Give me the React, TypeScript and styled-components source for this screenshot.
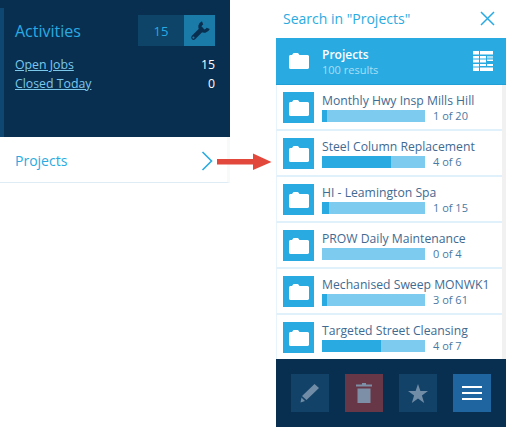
import styled, { createGlobalStyle } from 'styled-components';

const GlobalStyle = createGlobalStyle`
    html, body {
        margin: 0;
        padding: 0;
        background: #fff;
        font-family: "Open Sans", "Liberation Sans", sans-serif;
    }
`;

const Page = styled.div`
    position: relative;
    width: 506px;
    height: 427px;
    overflow: hidden;
    display: flex;
    justify-content: space-between;
    align-items: flex-start;
`;

// LEFT SIDE

const LeftColumn = styled.div`
    width: 230px;
`;

const Dashboard = styled.div`
    height: 137px;
    background: #092f50;
    padding: 8px 0 7px;
    box-sizing: border-box;
`;

const Tile = styled.div`
    height: 122px;
    border-left: 4px solid #0e4772;
    padding: 7px 15px 0 11px;
`;

const TileHead = styled.div`
    display: flex;
    justify-content: space-between;
    align-items: center;
    margin-bottom: 9px;
`;

const TileTitle = styled.div`
    font-size: 16px;
    color: #29abe2;
`;

const Counter = styled.div`
    display: flex;
    height: 31px;
`;

const CounterValue = styled.div`
    width: 46px;
    background: #0e4468;
    color: #29abe2;
    font-size: 13px;
    display: flex;
    align-items: center;
    justify-content: center;
`;

const CounterIcon = styled.div`
    width: 31px;
    background: #1b7ba8;
    display: flex;
    align-items: center;
    justify-content: center;
`;

const StatRow = styled.div`
    display: flex;
    justify-content: space-between;
    height: 19px;
    line-height: 19px;
    font-size: 12.3px;
`;

const StatLink = styled.a`
    color: #7cc8eb;
    text-decoration: underline;
`;

const StatValue = styled.span`
    color: #fff;
`;

const NavRow = styled.div`
    width: 230px;
    height: 46px;
    padding: 2px 15px 0 15px;
    border-right: 3px solid #f8f9f9;
    border-bottom: 1px solid #deedf5;
    box-sizing: border-box;
    display: flex;
    justify-content: space-between;
    align-items: center;
    color: #29abe2;
    font-size: 14px;
`;

const NavChevron = styled.svg`
    margin-right: -1px;
`;

const Arrow = styled.svg`
    position: absolute;
    left: 217px;
    top: 153px;
`;

// RIGHT SIDE

const SearchPanel = styled.div`
    width: 230px;
    height: 427px;
    display: flex;
    flex-direction: column;
`;

const SearchHead = styled.div`
    height: 38px;
    padding: 0 11px 1px 7px;
    display: flex;
    justify-content: space-between;
    align-items: center;
    color: #29abe2;
    font-size: 14px;
    box-sizing: border-box;
`;

const ResultsBar = styled.div`
    height: 47px;
    padding: 0 13px 0 13px;
    background: #29abe2;
    border-bottom: 1px solid #1f9fd6;
    box-sizing: border-box;
    display: flex;
    align-items: center;
`;

const ResultsText = styled.div`
    margin-left: 13px;
    flex: 1;
`;

const ResultsTitle = styled.div`
    color: #fff;
    font-size: 12px;
    line-height: 17px;
    font-weight: 600;
`;

const ResultsCount = styled.div`
    color: #a9def5;
    font-size: 11px;
    line-height: 14px;
`;

const List = styled.div`
    height: 274px;
    overflow: hidden;
    padding-right: 4px;
    background: linear-gradient(#f1f1f1, #f1f1f1) right / 4px 100% no-repeat;
`;

const Row = styled.div`
    height: 46px;
    box-sizing: border-box;
    padding: 7px 0 0 6px;
    background: #fff;
    border-left: 1px solid #e8f4fb;
    border-bottom: 2px solid #e0f1fb;
    display: flex;
    &:last-child {
        border-bottom: none;
    }
`;

const Thumb = styled.div`
    width: 31px;
    height: 31px;
    background: #29abe2;
    flex: none;
    display: flex;
    align-items: center;
    justify-content: center;
`;

const RowBody = styled.div`
    margin-left: 8px;
    flex: 1;
    min-width: 0;
`;

const RowTitle = styled.div`
    font-size: 12.2px;
    line-height: 17px;
    color: #3f6a92;
    white-space: nowrap;
`;

const RowProgress = styled.div`
    display: flex;
    align-items: center;
    margin-top: 1px;
`;

const Bar = styled.div`
    width: 103px;
    height: 12px;
    background: #7dcbee;
`;

const BarFill = styled.div`
    height: 100%;
    background: #29abe2;
`;

const BarLabel = styled.span`
    margin-left: 8px;
    font-size: 11px;
    color: #4a7aa3;
    line-height: 12px;
`;

const Footer = styled.div`
    flex: 1;
    background: #092f50;
    display: flex;
    gap: 16px;
    padding: 15px 15px 0;
`;

const FooterButton = styled.div<{ $tone: string }>`
    width: 38.5px;
    height: 38px;
    background: ${props => props.$tone};
    display: flex;
    align-items: center;
    justify-content: center;
`;

// ICONS

const Folder = () => (
    <svg width="20" height="16" viewBox="0 0 20 16">
        <path d="M0 3 L1 2 H3 L4.5 0 H9 L10.5 2 H19 L20 3 V15 L19 16 H1 L0 15 Z" fill="#fff" />
    </svg>
);

const Wrench = () => (
    <svg width="20" height="20" viewBox="0 0 20 20">
        <path d="M3.5 16.5 L11.5 8.5" stroke="#092f50" strokeWidth="4.6" strokeLinecap="round" />
        <path d="M12.6 1.8 A4.3 4.3 0 1 0 18.2 7.4" fill="none" stroke="#092f50" strokeWidth="3.4" />
        <circle cx="3.4" cy="16.6" r="1.1" fill="#1b7ba8" />
    </svg>
);

const projects = [
    { name: 'Monthly Hwy Insp Mills Hill', done: 1, total: 20 },
    { name: 'Steel Column Replacement', done: 4, total: 6 },
    { name: 'HI - Leamington Spa', done: 1, total: 15 },
    { name: 'PROW Daily Maintenance', done: 0, total: 4 },
    { name: 'Mechanised Sweep MONWK1', done: 3, total: 61 },
    { name: 'Targeted Street Cleansing', done: 4, total: 7 },
];

const App = () => (
    <Page>
        <GlobalStyle />
        <LeftColumn>
            <Dashboard>
                <Tile>
                    <TileHead>
                        <TileTitle>Activities</TileTitle>
                        <Counter>
                            <CounterValue>15</CounterValue>
                            <CounterIcon><Wrench /></CounterIcon>
                        </Counter>
                    </TileHead>
                    <StatRow><StatLink>Open Jobs</StatLink><StatValue>15</StatValue></StatRow>
                    <StatRow><StatLink>Closed Today</StatLink><StatValue>0</StatValue></StatRow>
                </Tile>
            </Dashboard>
            <NavRow>
                Projects
                <NavChevron width="12" height="20" viewBox="0 0 12 20">
                    <path d="M1.5 1 L10.5 10 L1.5 19" fill="none" stroke="#29abe2" strokeWidth="1.6" />
                </NavChevron>
            </NavRow>
        </LeftColumn>

        <Arrow width="55" height="18" viewBox="0 0 55 18">
            <path d="M0 6 H36 V0.5 L54.5 9 L36 17 V11.5 H0 Z" fill="#e2483b" />
        </Arrow>

        <SearchPanel>
            <SearchHead>
                Search in "Projects"
                <svg width="15" height="15" viewBox="0 0 15 15">
                    <path d="M1 1 L14 14 M14 1 L1 14" stroke="#29abe2" strokeWidth="1.5" />
                </svg>
            </SearchHead>
            <ResultsBar>
                <Folder />
                <ResultsText>
                    <ResultsTitle>Projects</ResultsTitle>
                    <ResultsCount>100 results</ResultsCount>
                </ResultsText>
                <svg width="20" height="20" viewBox="0 0 20 20" fill="#fff">
                    <path d="M0 0H6V3.5H0Z M7 0H20V3.5H7Z M0 5H6V7.5H0Z M7 5H13V7.5H7Z M0 8.5H6V11.5H0Z M7 8.5H13V11.5H7Z M14 8.5H20V10H14Z M0 13H6V15.5H0Z M7 13H13V15H7Z M14 13H20V15H14Z M0 16.5H6V20H0Z M7 16.5H20V20H7Z" />
                    <path d="M14 5H20V7.5H14Z" fill="#a9def5" />
                </svg>
            </ResultsBar>
            <List>
                {projects.map(project => (
                    <Row key={project.name}>
                        <Thumb><Folder /></Thumb>
                        <RowBody>
                            <RowTitle>{project.name}</RowTitle>
                            <RowProgress>
                                <Bar><BarFill style={{ width: `${(project.done / project.total) * 100}%` }} /></Bar>
                                <BarLabel>{project.done} of {project.total}</BarLabel>
                            </RowProgress>
                        </RowBody>
                    </Row>
                ))}
            </List>
            <Footer>
                <FooterButton $tone="#134268">
                    <svg width="20" height="20" viewBox="0 0 20 20">
                        <path d="M14.5 1 L19 5 L6.5 17 L2 13 Z M1.5 14.5 L5 18 L0.5 19.5 Z" fill="#718ca6" />
                    </svg>
                </FooterButton>
                <FooterButton $tone="#683747">
                    <svg width="16" height="20" viewBox="0 0 16 20">
                        <path d="M6 0H10V1.5H16V3.5H0V1.5H6Z M1.5 5.5H14.5V20H1.5Z" fill="#7c8fa6" />
                    </svg>
                </FooterButton>
                <FooterButton $tone="#134268">
                    <svg width="20" height="19" viewBox="0 0 20 19">
                        <path d="M10 0 L12.4 7 H20 L13.9 11.5 L16.2 19 L10 14.4 L3.8 19 L6.1 11.5 L0 7 H7.6 Z" fill="#718ca6" />
                    </svg>
                </FooterButton>
                <FooterButton $tone="#1f659f">
                    <svg width="20" height="14" viewBox="0 0 20 14">
                        <path d="M0 0H20V2H0Z M0 6H20V8H0Z M0 12H20V14H0Z" fill="#fff" />
                    </svg>
                </FooterButton>
            </Footer>
        </SearchPanel>
    </Page>
);

export default App;
